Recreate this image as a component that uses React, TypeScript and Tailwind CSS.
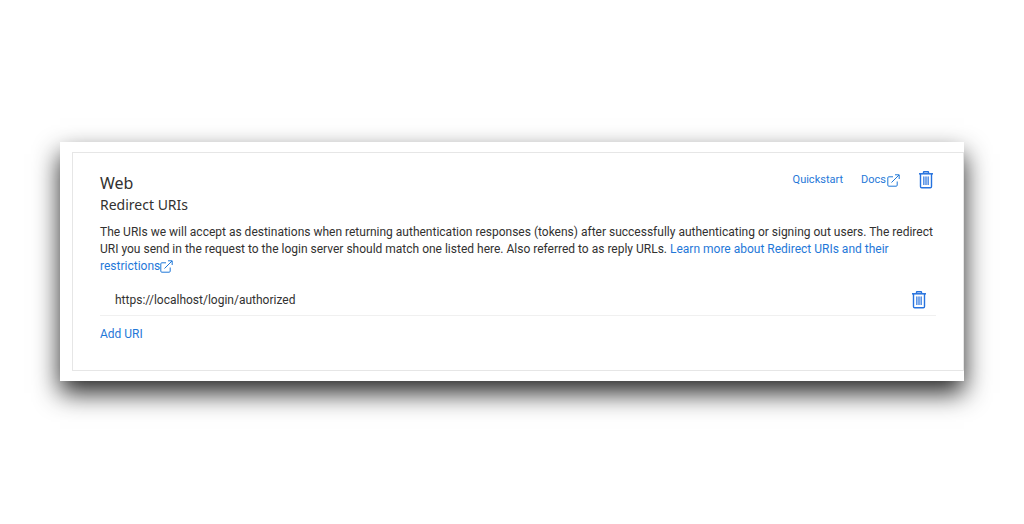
import { useState } from 'react';

interface IconProps {
  className?: string;
}

function TrashIcon({ className }: IconProps) {
  return (
    <svg className={className} width="14" height="18" viewBox="0 0 14 18" fill="none" stroke="currentColor" aria-hidden="true">
      <path d="M4.5 2.5V1.2Q4.5 0.8 5 0.8H9Q9.5 0.8 9.5 1.2V2.5" strokeWidth="1.4" />
      <path d="M0 2.8H14" strokeWidth="1.5" />
      <path d="M1.5 3V15.5Q1.5 16.7 2.7 16.7H11.3Q12.5 16.7 12.5 15.5V3" strokeWidth="1.4" />
      <path d="M4 5.5H10V14H4Z" fill="currentColor" fillOpacity="0.45" stroke="none" />
      <path d="M4.5 5.5V14M7 5.5V14M9.5 5.5V14" strokeWidth="0.8" strokeOpacity="0.7" />
    </svg>
  );
}

function ExternalIcon({ className }: IconProps) {
  return (
    <svg className={className} width="13" height="13" viewBox="0 0 13 13" fill="none" stroke="currentColor" aria-hidden="true">
      <path d="M6 2.8H1.8Q0.8 2.8 0.8 3.8V11.2Q0.8 12.2 1.8 12.2H9.2Q10.2 12.2 10.2 11.2V7.5" />
      <path d="M4.5 8.5L12 1M8 0.8H12.2V5" />
    </svg>
  );
}

export default function App() {
  const [uris, setUris] = useState<string[]>(['https://localhost/login/authorized']);
  const [visible, setVisible] = useState(true);

  const removeUri = (index: number) => {
    setUris(uris.filter((_, i) => i !== index));
  };

  return (
    <main className="flex min-h-screen items-center bg-white px-[60px] pb-px font-['Roboto','Noto_Sans',sans-serif] text-xs text-[#323130]">
      <div className="w-full bg-white py-2.5 pl-3 shadow-[0_12px_24px_rgba(0,0,0,0.85)]">
        {visible && (
          <section className="border border-[#e6e6e6] px-[27px] pt-4 pb-7">
            {/* Header */}
            <header className="flex items-start justify-between">
              <div className="font-['Noto_Sans','Open_Sans',sans-serif]">
                <h1 className="mt-1 text-base leading-5">Web</h1>
                <h2 className="text-sm leading-6">Redirect URIs</h2>
              </div>
              <nav className="mt-px flex items-center text-[11px] leading-5 text-[#1f78d8]">
                <a href="#quickstart" className="hover:underline">Quickstart</a>
                <a href="#docs" className="ml-[18px] flex items-center gap-px hover:underline">
                  Docs
                  <ExternalIcon />
                </a>
                <button type="button" aria-label="Delete platform" onClick={() => setVisible(false)} className="mr-[3px] ml-[19px] text-[#2672de]">
                  <TrashIcon />
                </button>
              </nav>
            </header>

            <p className="mt-[7px] leading-[17px]">
              The URIs we will accept as destinations when returning authentication responses (tokens) after successfully
              authenticating or signing out users. The redirect URI you send in the request to the login server should
              match one listed here. Also referred to as reply URLs.{' '}
              <a href="#learn-more" className="text-[#1f78d8] hover:underline">
                Learn more about Redirect URIs and their restrictions
                <ExternalIcon className="inline" />
              </a>
            </p>

            {/* Registered URIs */}
            <ul className="mt-[9px]">
              {uris.map((uri, index) => (
                <li key={uri} className="flex h-8 items-center justify-between border-b border-[#f0f0f0] pr-2.5 pl-[15px]">
                  <span>{uri}</span>
                  <button type="button" aria-label={`Delete ${uri}`} onClick={() => removeUri(index)} className="text-[#2672de]">
                    <TrashIcon />
                  </button>
                </li>
              ))}
            </ul>

            <button type="button" onClick={() => setUris([...uris, 'https://'])} className="mt-2.5 leading-4 text-[#1f78d8] hover:underline">
              Add URI
            </button>
          </section>
        )}
      </div>
    </main>
  );
}
